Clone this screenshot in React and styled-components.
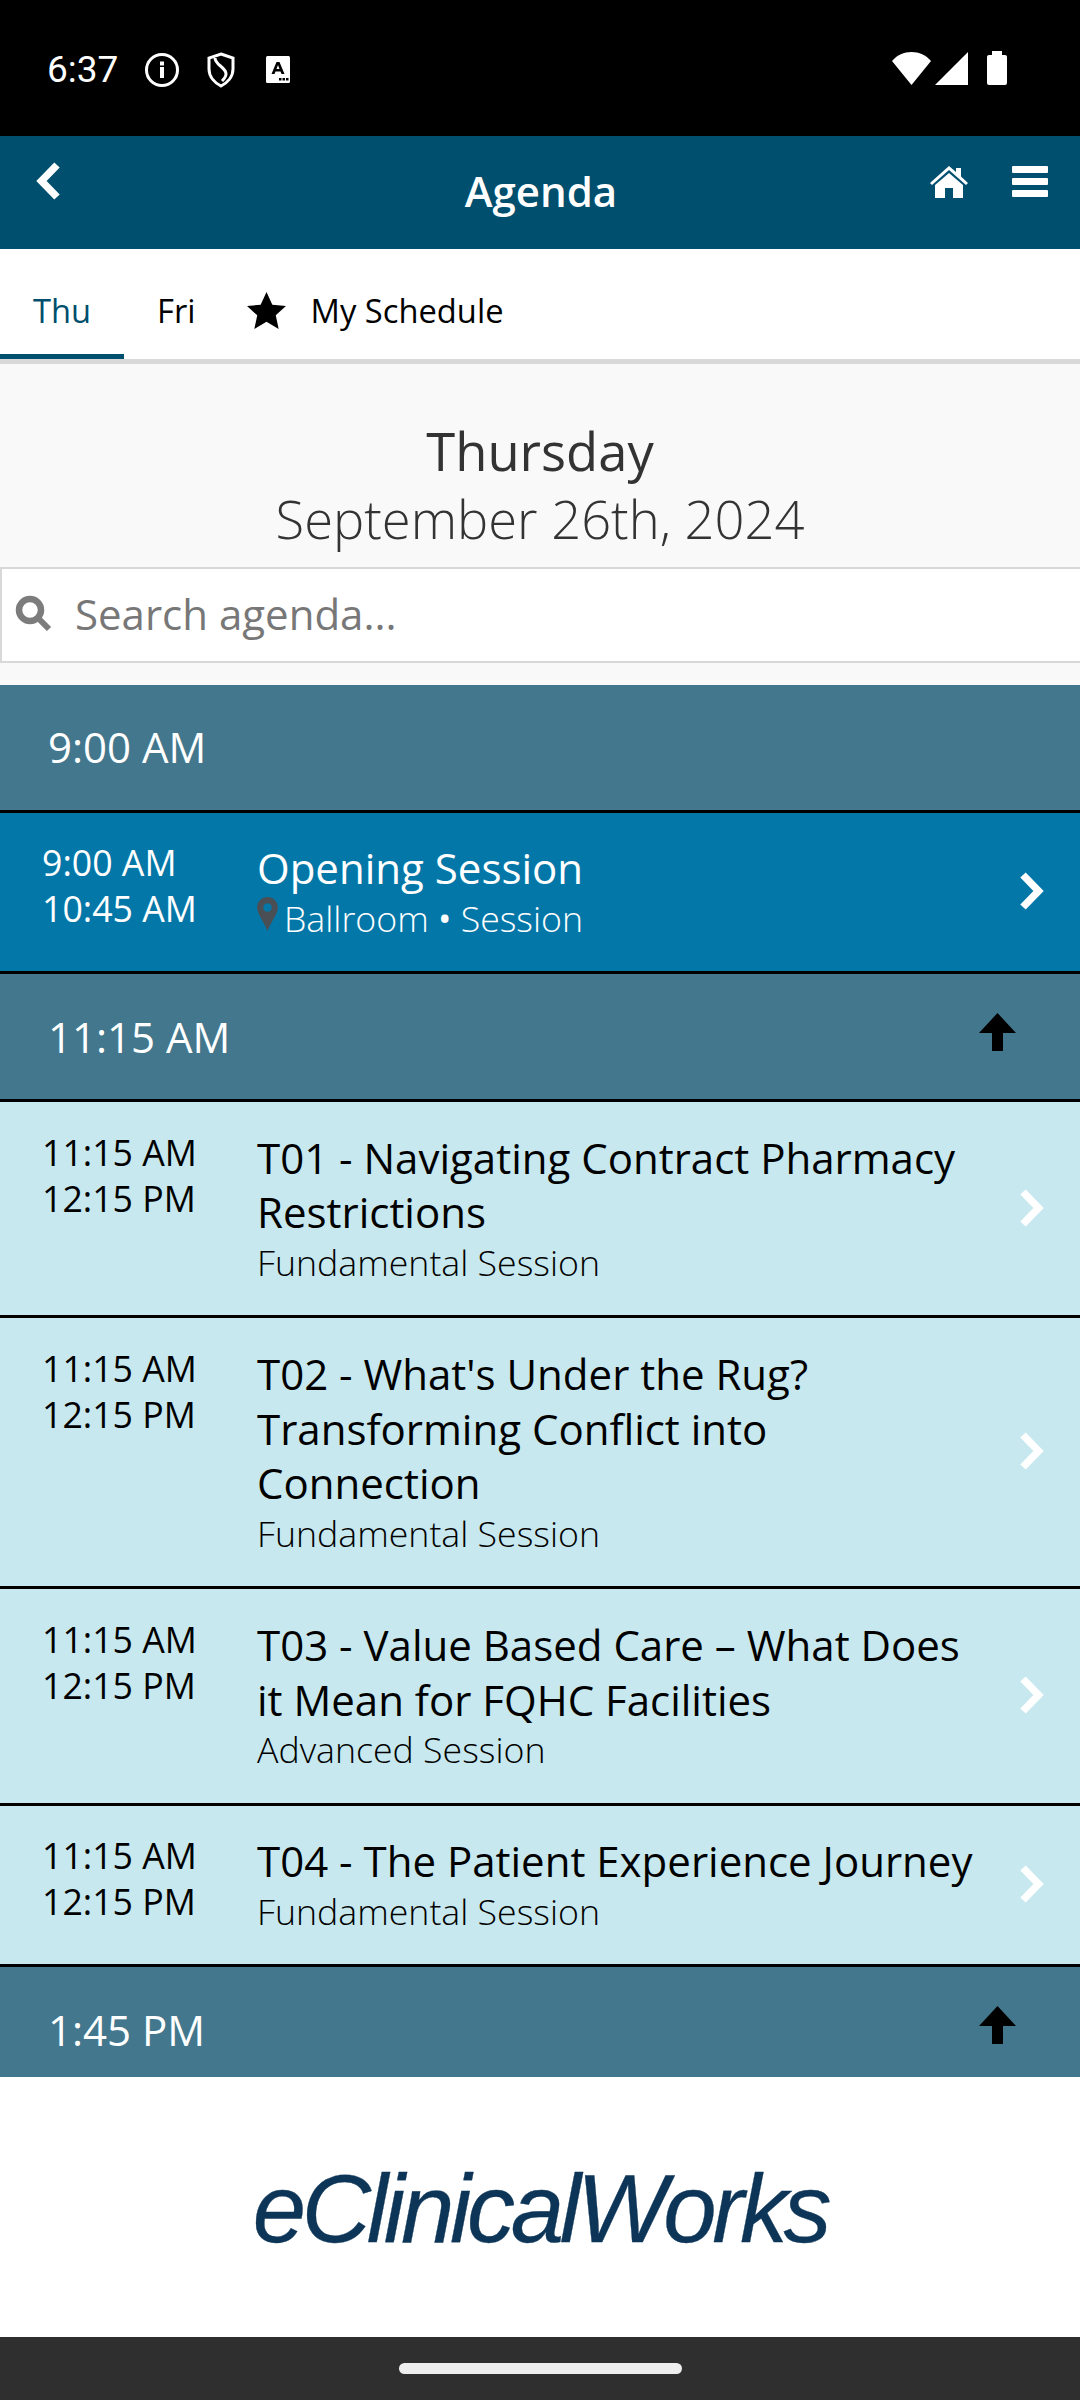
import React from 'react'
import styled, { createGlobalStyle } from 'styled-components'

const GlobalStyle = createGlobalStyle`
  * { box-sizing: border-box; }
  html, body { margin: 0; padding: 0; background: #fff; }
  body { font-family: "Open Sans", sans-serif; }
`

const agenda = [
  {
    time: '9:00 AM',
    sessions: [
      { start: '9:00 AM', end: '10:45 AM', title: ['Opening Session'], room: 'Ballroom', sub: 'Session', active: true },
    ],
  },
  {
    time: '11:15 AM',
    up: true,
    sessions: [
      { start: '11:15 AM', end: '12:15 PM', title: ['T01 - Navigating Contract Pharmacy', 'Restrictions'], sub: 'Fundamental Session' },
      { start: '11:15 AM', end: '12:15 PM', title: ["T02 - What's Under the Rug?", 'Transforming Conflict into', 'Connection'], sub: 'Fundamental Session' },
      { start: '11:15 AM', end: '12:15 PM', title: ['T03 - Value Based Care – What Does', 'it Mean for FQHC Facilities'], sub: 'Advanced Session' },
      { start: '11:15 AM', end: '12:15 PM', title: ['T04 - The Patient Experience Journey'], sub: 'Fundamental Session' },
    ],
  },
  { time: '1:45 PM', up: true, sessions: [] },
]

function Chevron({ dir }) {
  return (
    <svg width="25" height="38" viewBox="0 0 25 38">
      <path
        d={dir === 'left' ? 'M21 3 L5.500 19 L21 35' : 'M4 3 L19.500 19 L4 35'}
        fill="none"
        stroke="#fff"
        strokeWidth="7.500"
      />
    </svg>
  )
}

function ArrowUp() {
  return (
    <ArrowIcon width="37" height="38" viewBox="0 0 37 38">
      <path d="M18.500 0 L37 20 L24 20 L24 38 L13 38 L13 20 L0 20 Z" fill="#000" />
    </ArrowIcon>
  )
}

function Pin() {
  return (
    <PinIcon width="21" height="34" viewBox="0 0 22 36">
      <path fillRule="evenodd" d="M11 0 C17 0 22 5 22 11 C22 18 14 27 11 36 C8 27 0 18 0 11 C0 5 5 0 11 0 Z M11 6.500 A4.500 4.500 0 1 0 11 15.500 A4.500 4.500 0 1 0 11 6.500 Z" fill="#4a4f55" />
    </PinIcon>
  )
}

export default function App() {
  return (
    <Screen>
      <GlobalStyle />
      <StatusBar>
        <StatusLeft>
          <Clock>6:37</Clock>
          <svg width="36" height="36" viewBox="0 0 36 36">
            <circle cx="18" cy="18" r="15.500" fill="none" stroke="#fff" strokeWidth="3" />
            <rect x="16" y="15" width="4" height="11" fill="#fff" />
            <rect x="16" y="9.500" width="4" height="4" fill="#fff" />
          </svg>
          <svg width="30" height="36" viewBox="0 0 30 36">
            <path d="M15 2 L27 6 V17 C27 25 21 31 15 34 C9 31 3 25 3 17 V6 Z" fill="none" stroke="#fff" strokeWidth="3" />
            <path d="M9 6 C9 13 20 15 20 22 C20 25 18 27 16 29" fill="none" stroke="#fff" strokeWidth="3" />
          </svg>
          <svg width="28" height="27" viewBox="0 0 28 27">
            <rect x="4" y="0" width="24" height="27" rx="1.500" fill="#fff" />
            <path d="M9.500 18 L14.500 6 H17.500 L22.500 18 H19.500 L18.500 15.500 H13.500 L12.500 18 Z M14.500 13 H17.500 L16 9 Z" fill="#000" fillRule="evenodd" />
            <rect x="17" y="22" width="2.500" height="2.500" fill="#000" />
            <rect x="20.500" y="22" width="2.500" height="2.500" fill="#000" />
            <rect x="24" y="22" width="2.500" height="2.500" fill="#000" />
          </svg>
        </StatusLeft>
        <StatusRight>
          <svg width="39" height="33" viewBox="0 0 39 33">
            <path d="M19.500 33 L0 9 C5 3 12 0 19.500 0 C27 0 34 3 39 9 Z" fill="#fff" />
          </svg>
          <svg width="33" height="33" viewBox="0 0 33 33">
            <path d="M33 0 V33 H0 Z" fill="#fff" />
          </svg>
          <Battery />
        </StatusRight>
      </StatusBar>

      <Header>
        <BackButton><Chevron dir="left" /></BackButton>
        <Title>Agenda</Title>
        <HeaderIcons>
          <svg width="38" height="32" viewBox="0 0 38 32">
            <path d="M19 0 L26 6 V2 H31 V10.500 L38 17 L36 19 L19 4 L2 19 L0 17 Z" fill="#fff" />
            <path d="M19 7 L33 19 V32 H23 V22 H15 V32 H5 V19 Z" fill="#fff" />
          </svg>
          <Bars><i /><i /><i /></Bars>
        </HeaderIcons>
      </Header>

      <Tabs>
        <Tab $active>Thu</Tab>
        <Tab>Fri</Tab>
        <StarTab>
          <svg width="39" height="37" viewBox="0 0 40 38">
            <path d="M20 0 L26 13 L40 14.500 L29.500 24 L32.500 38 L20 30.500 L7.500 38 L10.500 24 L0 14.500 L14 13 Z" fill="#000" />
          </svg>
          My Schedule
        </StarTab>
      </Tabs>

      <Content>
        <DayHeading>
          <DayName>Thursday</DayName>
          <DayDate>September 26th, 2024</DayDate>
        </DayHeading>
        <SearchBox>
          <svg width="38" height="38" viewBox="0 0 38 38">
            <circle cx="15" cy="15" r="11" fill="none" stroke="#7c7c7c" strokeWidth="6.500" />
            <path d="M23 23 L34 34" stroke="#7c7c7c" strokeWidth="6" />
          </svg>
          <SearchText>Search agenda...</SearchText>
        </SearchBox>
        <List>
          {agenda.map((group) => (
            <React.Fragment key={group.time}>
              <GroupHeader>
                {group.time}
                {group.up && <ArrowUp />}
              </GroupHeader>
              {group.sessions.map((s) => (
                <Session key={s.title[0]} $active={s.active}>
                  <Times>
                    <div>{s.start}</div>
                    <div>{s.end}</div>
                  </Times>
                  <Body>
                    {s.title.map((line) => <div key={line}>{line}</div>)}
                    <Sub>
                      {s.room && <Pin />}
                      <span>
                        {s.room && <>{s.room} <Dot>•</Dot> </>}
                        {s.sub}
                      </span>
                    </Sub>
                  </Body>
                  <Chevron dir="right" />
                </Session>
              ))}
            </React.Fragment>
          ))}
        </List>
      </Content>

      <Footer>
        <Logo>eClinicalWorks</Logo>
      </Footer>
      <NavBar><Pill /></NavBar>
    </Screen>
  )
}

const Screen = styled.div`
  width: 1080px;
  height: 2400px;
  display: flex;
  flex-direction: column;
  overflow: hidden;
  background: #fff;
`
const StatusBar = styled.div`
  height: 136px;
  flex: none;
  background: #000;
  display: flex;
  justify-content: space-between;
  align-items: center;
  padding: 0 73px 0 47px;
`
const StatusLeft = styled.div`
  display: flex;
  align-items: center;
  gap: 26px;
  padding-top: 3px;
`
const Clock = styled.div`
  color: #fff;
  font-family: Roboto, sans-serif;
  font-size: 37px;
`
const StatusRight = styled.div`
  display: flex;
  align-items: center;
  gap: 4px;
`
const Battery = styled.div`
  width: 20px;
  height: 30px;
  margin: 4px 0 0 15px;
  background: #fff;
  border-radius: 2px;
  position: relative;
  &::before {
    content: '';
    position: absolute;
    top: -4px;
    left: 5px;
    width: 10px;
    height: 4px;
    background: #fff;
  }
`
const Header = styled.div`
  height: 113px;
  flex: none;
  background: #004f6e;
  display: flex;
  align-items: center;
  justify-content: space-between;
  padding: 0 32px 0 36px;
  position: relative;
`
const BackButton = styled.div`
  display: flex;
  margin-bottom: 24px;
`
const Title = styled.div`
  position: absolute;
  left: 0;
  right: 0;
  padding: 0 0 4px 2px;
  text-align: center;
  color: #fff;
  font-size: 42px;
  font-weight: 600;
`
const HeaderIcons = styled.div`
  display: flex;
  align-items: center;
  gap: 44px;
  margin-bottom: 22px;
`
const Bars = styled.div`
  display: flex;
  flex-direction: column;
  gap: 5px;
  i {
    display: block;
    width: 36px;
    height: 7px;
    border-radius: 1px;
    background: #fff;
  }
`
const Tabs = styled.div`
  height: 115px;
  flex: none;
  display: flex;
  background: #fff;
  border-bottom: 5px solid #d9d9d9;
`
const Tab = styled.div`
  height: 110px;
  padding: 18px 33px 0;
  display: flex;
  align-items: center;
  font-size: 32.7px;
  color: ${(p) => (p.$active ? '#004f6e' : '#000')};
  border-bottom: 5px solid ${(p) => (p.$active ? '#004f6e' : 'transparent')};
`
const StarTab = styled(Tab)`
  gap: 25px;
  padding-left: 18px;
`
const Content = styled.div`
  flex: 1;
  min-height: 0;
  overflow: hidden;
  background: #f9f9f9;
`
const DayHeading = styled.div`
  padding-top: 53px;
  text-align: center;
  color: #333;
`
const DayName = styled.div`
  font-size: 52.5px;
  line-height: 68px;
`
const DayDate = styled.div`
  font-size: 52.5px;
  line-height: 68px;
  font-weight: 300;
`
const SearchBox = styled.div`
  height: 96px;
  margin-top: 14px;
  padding: 0 0 3px 13px;
  display: flex;
  align-items: center;
  gap: 22px;
  background: #fff;
  border: 2px solid #d8d8d8;
  border-right: 0;
`
const SearchText = styled.div`
  font-size: 42px;
  color: #777;
`
const List = styled.div`
  margin-top: 22px;
`
const GroupHeader = styled.div`
  height: 127.6px;
  display: flex;
  align-items: center;
  justify-content: space-between;
  padding: 0 64px 1px 48px;
  background: #42778d;
  border-bottom: 3px solid #000;
  color: #fff;
  font-size: 42px;
`
const ArrowIcon = styled.svg`
  margin-bottom: 8px;
`
const Session = styled.div`
  display: flex;
  align-items: center;
  padding: 28.8px 36px 30.8px 42px;
  background: ${(p) => (p.$active ? '#0377a8' : '#c7e8ee')};
  color: ${(p) => (p.$active ? '#fff' : '#000')};
  border-bottom: 3px solid #000;
  font-size: 42px;
  line-height: 54.6px;
`
const Times = styled.div`
  width: 215px;
  flex: none;
  align-self: flex-start;
  margin-top: -2px;
  font-size: 35.7px;
  line-height: 46px;
`
const Body = styled.div`
  flex: 1;
`
const Sub = styled.div`
  display: flex;
  align-items: center;
  gap: 6px;
  font-size: 35.7px;
  font-weight: 300;
  line-height: 44.6px;
`
const Dot = styled.span`
  font-weight: 400;
`
const PinIcon = styled.svg`
  margin-top: -9px;
`
const Footer = styled.div`
  height: 260px;
  flex: none;
  padding-top: 4px;
  display: flex;
  align-items: center;
  justify-content: center;
  background: #fff;
`
const Logo = styled.div`
  font-family: "Liberation Sans", Arial, sans-serif;
  font-style: italic;
  font-size: 96px;
  letter-spacing: -4.3px;
  color: #0d3557;
  -webkit-text-stroke: 0.3px #0d3557;
`
const NavBar = styled.div`
  height: 63px;
  flex: none;
  background: #2f2f2f;
  display: flex;
  justify-content: center;
  padding-top: 26px;
`
const Pill = styled.div`
  width: 283px;
  height: 11px;
  border-radius: 6px;
  background: #eee;
`
